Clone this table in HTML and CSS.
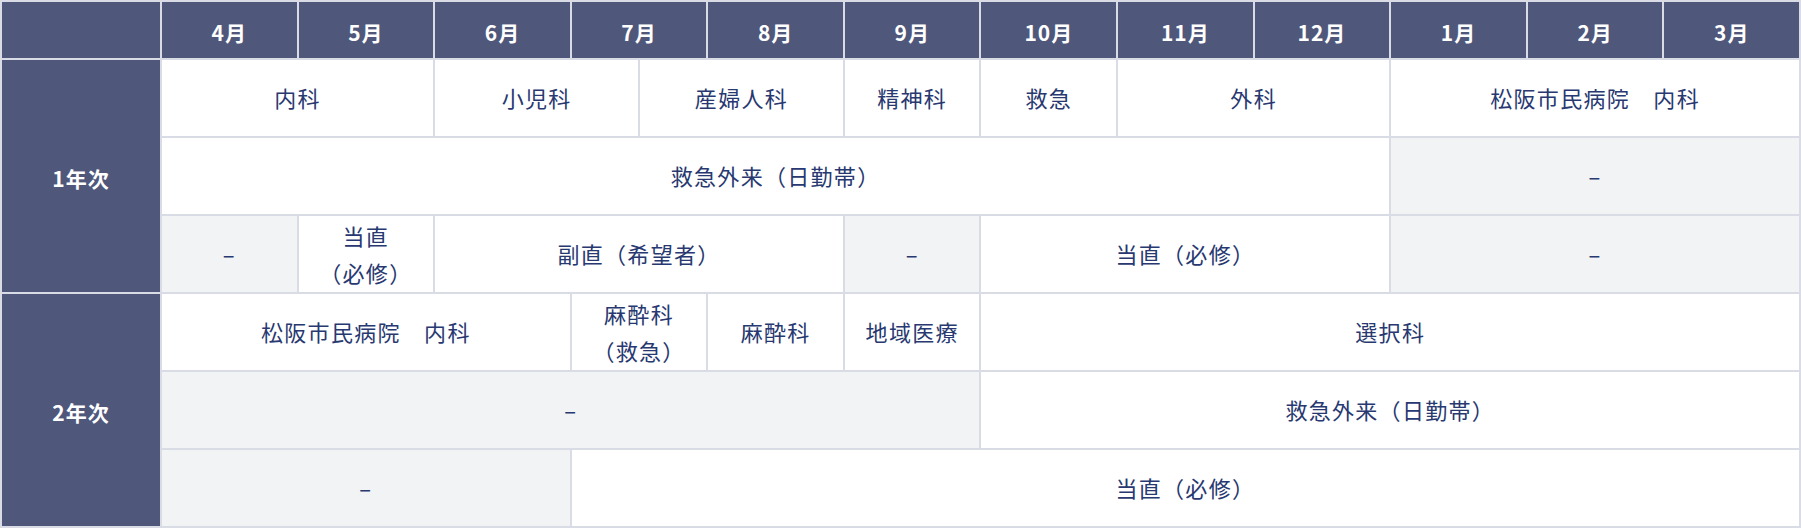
FILE: index.html
```html
<!DOCTYPE html>
<html lang="ja">
<head>
<meta charset="utf-8">
<title>研修スケジュール</title>
<link rel="stylesheet" href="styles.css">
</head>
<body>
<div class="schedule">
  <div class="cell head corner"></div>
  <div class="cell head m">4月</div>
  <div class="cell head m">5月</div>
  <div class="cell head m">6月</div>
  <div class="cell head m">7月</div>
  <div class="cell head m">8月</div>
  <div class="cell head m">9月</div>
  <div class="cell head m">10月</div>
  <div class="cell head m">11月</div>
  <div class="cell head m">12月</div>
  <div class="cell head m">1月</div>
  <div class="cell head m">2月</div>
  <div class="cell head m">3月</div>

  <div class="cell head year">1年次</div>
  <div class="cell s4">内科</div>
  <div class="cell s3">小児科</div>
  <div class="cell s3">産婦人科</div>
  <div class="cell s2">精神科</div>
  <div class="cell s2">救急</div>
  <div class="cell s4">外科</div>
  <div class="cell s6">松阪市民病院　内科</div>

  <div class="cell s18">救急外来（日勤帯）</div>
  <div class="cell s6 off">–</div>

  <div class="cell s2 off">–</div>
  <div class="cell s2">当直<br>（必修）</div>
  <div class="cell s6">副直（希望者）</div>
  <div class="cell s2 off">–</div>
  <div class="cell s6">当直（必修）</div>
  <div class="cell s6 off">–</div>

  <div class="cell head year">2年次</div>
  <div class="cell s6">松阪市民病院　内科</div>
  <div class="cell s2">麻酔科<br>（救急）</div>
  <div class="cell s2">麻酔科</div>
  <div class="cell s2">地域医療</div>
  <div class="cell s12">選択科</div>

  <div class="cell s12 off">–</div>
  <div class="cell s12">救急外来（日勤帯）</div>

  <div class="cell s6 off">–</div>
  <div class="cell s18">当直（必修）</div>
</div>
</body>
</html>
```

FILE: styles.css
```css
html, body {
  margin: 0;
  padding: 0;
  background: #ffffff;
}

body {
  font-family: "Noto Sans CJK JP", "Noto Sans", sans-serif;
  color: #283870;
}

.schedule {
  width: 1801px;
  height: 528px;
  box-sizing: border-box;
  display: grid;
  grid-template-columns: 158px repeat(24, 1fr);
  grid-template-rows: 56px repeat(6, 76px);
  gap: 2px;
  padding: 2px;
  background: #d9dbe5;
}

.cell {
  display: flex;
  align-items: center;
  justify-content: center;
  text-align: center;
  background: #ffffff;
  font-size: 22px;
  line-height: 1.7;
  letter-spacing: 1.3px;
}

.head {
  background: #4f577b;
  color: #ffffff;
  font-weight: 700;
  font-size: 21px;
  letter-spacing: 1px;
}

.head.m {
  grid-column: span 2;
  padding-top: 6px;
}

.year {
  grid-row: span 3;
  padding-top: 6px;
}

.off {
  background: #f2f3f5;
}

.s2 { grid-column: span 2; }
.s3 { grid-column: span 3; }
.s4 { grid-column: span 4; }
.s6 { grid-column: span 6; }
.s12 { grid-column: span 12; }
.s18 { grid-column: span 18; }
```
